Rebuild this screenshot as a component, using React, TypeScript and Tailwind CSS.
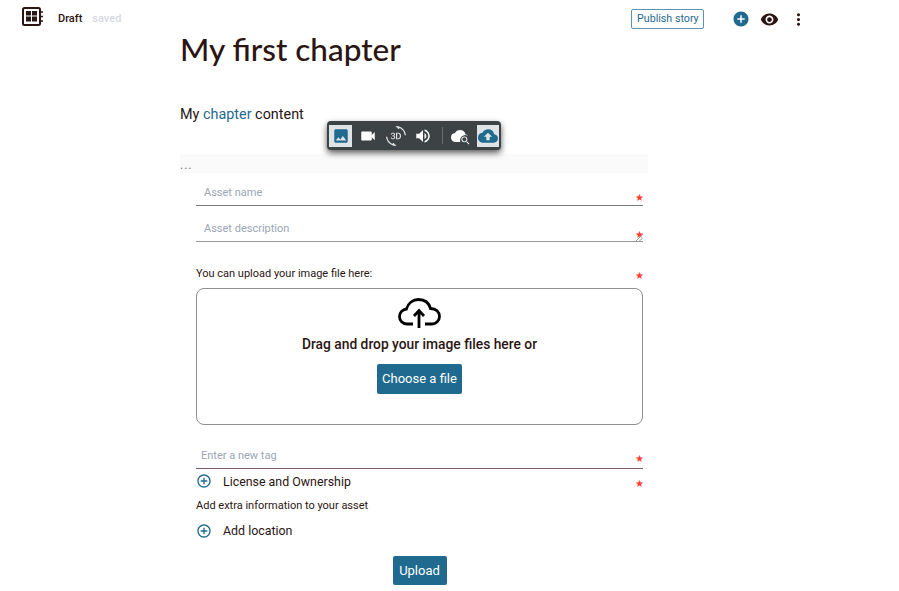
import React from "react";
import { MdImage, MdVideocam, Md3dRotation, MdVolumeUp, MdCloudUpload, MdAddCircle, MdVisibility, MdMoreVert, MdAddCircleOutline, MdCloud, MdSearch } from "react-icons/md";

function Star({ className }: { className: string }) {
  return <span className={"absolute text-[#fb3a30] text-[10px] leading-none " + className}>★</span>;
}

function Logo() {
  return (
    <svg width="22" height="19" viewBox="0 0 22 19" className="text-[#2a1512] mt-[-5px]">
      <rect x="1" y="1" width="17" height="17" rx="1.5" fill="none" stroke="currentColor" strokeWidth="2" />
      <rect x="4" y="4" width="5" height="4.5" fill="currentColor" />
      <rect x="10" y="4" width="5" height="4.5" fill="currentColor" />
      <rect x="4" y="9.5" width="5" height="5" fill="currentColor" />
      <rect x="10" y="9.5" width="5" height="5" fill="currentColor" />
      <path d="M19 5h2M19 9.5h2M19 14h2" stroke="currentColor" strokeWidth="1.5" />
    </svg>
  );
}

function UploadCloud() {
  return (
    <svg width="43" height="30" viewBox="0 0 43 30" fill="none" stroke="#000" strokeWidth="2.8" className="mt-[9px]">
      <path d="M15 26H9C4.5 26 1.5 22.5 1.5 18.5C1.5 14.5 4.5 11.5 8.5 11C10 5 15 1.5 20.5 1.5C26.5 1.5 31 5 32.5 10.5C38 10.5 41.5 14 41.5 18.5C41.5 22.5 38 26 34 26H27" />
      <path d="M21 30V12.5M16 18L21 12.5L26 18" />
    </svg>
  );
}

function Toolbar() {
  return (
    <div className="absolute left-[327px] top-[121px] w-[174px] h-[29px] bg-[#3d4245] rounded-[4px] shadow-[0_3px_6px_rgba(0,0,0,0.65)] flex items-center pl-[2px] text-white">
      <div className="w-[23px] h-[22px] bg-[#dfe3e5] flex items-center justify-center">
        <MdImage size={18} className="text-[#1f6a8e]" />
      </div>
      <div className="w-[32px] flex justify-center"><MdVideocam size={18} /></div>
      <div className="w-[24px] flex justify-center"><Md3dRotation size={20} className="text-[#e6e6e6]" /></div>
      <div className="w-[30px] flex justify-center"><MdVolumeUp size={18} /></div>
      <div className="w-[1px] h-[17px] bg-[#6a6f72] ml-[4px]" />
      <div className="w-[34px] flex justify-center">
        <span className="relative inline-block w-[18px] h-[18px]">
          <MdCloud size={18} />
          <span className="absolute right-[-2px] bottom-[-1px] w-[11px] h-[11px] rounded-full bg-[#3d4245] flex items-center justify-center">
            <MdSearch size={11} />
          </span>
        </span>
      </div>
      <div className="w-[22px] h-[22px] bg-[#dfe3e5] flex items-center justify-center">
        <MdCloudUpload size={20} className="text-[#1f6a8e]" />
      </div>
    </div>
  );
}

export default function App() {
  return (
    <div className="relative w-[899px] h-[591px] overflow-hidden bg-white font-['Roboto',sans-serif] text-[#2a1512]">
      <header className="h-[38px] flex items-center pl-[22px]">
        <Logo />
        <span className="ml-[14px] text-[11px] font-medium">Draft</span>
        <span className="ml-[10px] text-[11px] font-medium text-[#d5d8df]">saved</span>
        <button className="ml-[510px] w-[73px] h-[20px] border border-[#5c93ae] rounded-[2px] text-[10.7px] text-[#1f6a8e] flex items-center justify-center">Publish story</button>
        <MdAddCircle size={18} className="ml-[28px] text-[#1f6a8e]" />
        <MdVisibility size={19} className="ml-[10px]" />
        <MdMoreVert size={19} className="ml-[10px]" />
      </header>

      <main className="ml-[180px] w-[468px]">
        <h1 className="h-[34px] font-['Lato',sans-serif] font-medium text-[31.5px] leading-[23px] text-[#2a1512]">My first chapter</h1>
        <p className="mt-[31px] text-[14.4px] leading-[24px]">My <span className="text-[#1f6a8e]">chapter</span> content</p>

        <div className="mt-[27px] h-[19px] bg-[#fafafa] text-[12px] tracking-[1px] leading-[23px] text-[#777]">...</div>

        <div className="ml-[16px] w-[447px]">
          <div className="relative h-[33px] border-b border-[#7d7d7d] pl-[8px] text-[11px] leading-[40px] text-[#9aa5b5]">
            Asset name
            <Star className="right-[-1px] top-[20px]" />
          </div>
          <div className="relative mt-[3px] h-[33px] border-b border-[#9a9a9a] pl-[8px] text-[11px] leading-[40px] text-[#9aa5b5]">
            Asset description
            <Star className="right-[-1px] top-[21px]" />
            <svg width="7" height="7" viewBox="0 0 7 7" className="absolute right-0 bottom-0 text-[#999]">
              <path d="M0 7L7 0M3.5 7L7 3.5" stroke="currentColor" strokeWidth="1" />
            </svg>
          </div>
          <div className="relative mt-[24px] h-[16px] text-[11px] leading-[16px] text-[#2a1512]">
            You can upload your image file here:
            <Star className="right-[-1px] top-[5px]" />
          </div>
          <div className="mt-[6px] h-[137px] border border-[#8f8f8f] rounded-[8px] flex flex-col items-center">
            <UploadCloud />
            <div className="mt-[6px] text-[13.8px] leading-[20px] font-medium">Drag and drop your image files here or</div>
            <button className="mt-[10px] w-[85px] h-[30px] bg-[#1f6a8e] rounded-[2px] text-white text-[13px]">Choose a file</button>
          </div>
          <div className="relative mt-[15px] h-[29px] border-b border-[#7d5a68] pl-[5px] text-[11px] leading-[32px] text-[#9aa5b5]">
            Enter a new tag
            <Star className="right-[-1px] top-[14px]" />
          </div>
          <div className="relative mt-[1px] h-[24px] flex items-center">
            <MdAddCircleOutline size={16} className="text-[#1f6a8e] mt-[-2px]" />
            <span className="ml-[11px] text-[12.4px]">License and Ownership</span>
            <Star className="right-[-1px] top-[9px]" />
          </div>
          <div className="mt-[4px] h-[16px] text-[11px] leading-[16px]">Add extra information to your asset</div>
          <div className="mt-[5px] h-[24px] flex items-center">
            <MdAddCircleOutline size={16} className="text-[#1f6a8e]" />
            <span className="ml-[11px] text-[12.4px]">Add location</span>
          </div>
          <div className="mt-[13px] flex justify-center">
            <button className="w-[54px] h-[29px] bg-[#1f6a8e] rounded-[2px] text-white text-[13px]">Upload</button>
          </div>
        </div>
      </main>
      <Toolbar />
    </div>
  );
}
